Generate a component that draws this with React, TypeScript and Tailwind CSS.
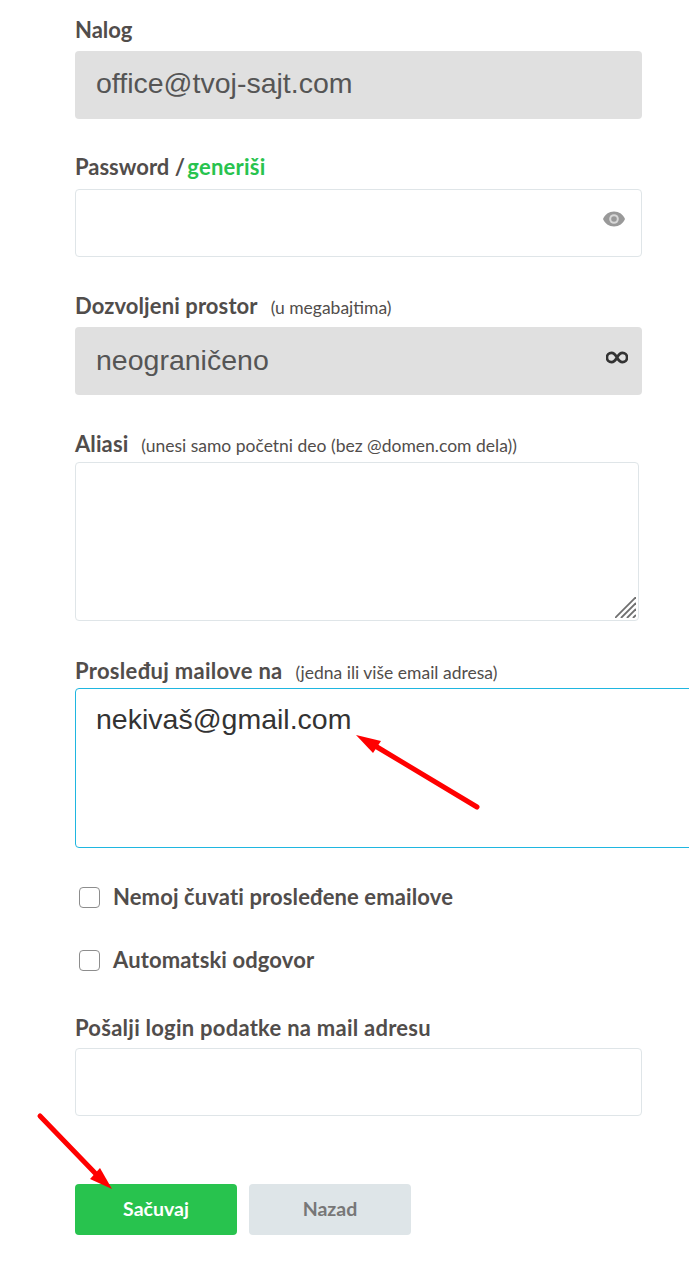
import type { ReactNode } from "react";

function FieldLabel({ children, className = "" }: { children: ReactNode; className?: string }) {
  return <label className={`block text-[22px] font-bold leading-[26px] text-[#514d4b] ${className}`}>{children}</label>;
}

function Hint({ children }: { children: ReactNode }) {
  return <span className="ml-[13px] text-[17.5px] font-normal leading-none tracking-normal text-[#514d4b]">{children}</span>;
}

const boxClass =
  "block h-[68px] w-[567px] rounded-[4px] px-[21px] font-['Liberation_Sans',Arial,sans-serif] text-[28.5px] outline-none";

function CheckRow({ label, gap, className = "" }: { label: string; gap: string; className?: string }) {
  return (
    <div className={`flex items-center pl-1 ${className}`}>
      <span className={`h-[21px] w-[21px] rounded-[4px] border border-[#8d8d8d] bg-white ${gap}`} />
      <span className="text-[22px] font-bold leading-[26px] tracking-[0.12px] text-[#514d4b]">{label}</span>
    </div>
  );
}

function ResizeGrip() {
  return (
    <svg className="absolute right-[3px] bottom-[3px]" width="21" height="21" viewBox="0 0 21 21" stroke="#6f6f6f" strokeWidth="1.8" strokeLinecap="round" fill="none">
      <path d="M0.500 20.500 L20.500 0.500" />
      <path d="M6.500 20.500 L20.500 6.500" />
      <path d="M12.500 20.500 L20.500 12.500" />
      <path d="M18.500 20.500 L20.500 18.500" />
    </svg>
  );
}

function Arrow({ className, x1, y1, x2, y2, head }: { className: string; x1: number; y1: number; x2: number; y2: number; head: string }) {
  return (
    <svg className={`absolute ${className}`} width="130" height="120" viewBox="0 0 130 120" fill="none">
      <line x1={x1} y1={y1} x2={x2} y2={y2} stroke="#ff0000" strokeWidth="5" strokeLinecap="round" />
      <polygon points={head} fill="#ff0000" />
    </svg>
  );
}

export default function App() {
  return (
    <div className="relative h-[1284px] w-[689px] overflow-hidden bg-white pl-[75px] pt-[17px] font-['Lato','Noto_Sans',sans-serif]">
      <FieldLabel>Nalog</FieldLabel>
      <input readOnly value="office@tvoj-sajt.com" className={`${boxClass} mt-[8px] bg-[#e0e0e0] pb-[3px] text-[#555]`} />

      <FieldLabel className="mt-[35px]">
        Password / <span className="-ml-[3px] tracking-[0.25px] text-[#28c34e]">generiši</span>
      </FieldLabel>
      <div className="relative mt-[9px] w-[567px]">
        <input type="text" className={`${boxClass} border border-[#dfe5e8] bg-white`} />
        <svg className="absolute right-[16px] top-[18px]" width="24" height="24" viewBox="0 0 24 24" fill="#999">
          <path d="M12 4.500C7 4.500 2.730 7.610 1 12c1.730 4.390 6 7.500 11 7.500s9.270-3.110 11-7.500c-1.730-4.390-6-7.500-11-7.500z" />
          <circle cx="12" cy="12" r="4.800" fill="#d8d8d8" />
          <circle cx="12" cy="12" r="2.800" fill="#999" />
        </svg>
      </div>

      <FieldLabel className="mt-[36px] tracking-[0.1px]">
        Dozvoljeni prostor<Hint>(u megabajtima)</Hint>
      </FieldLabel>
      <div className="relative mt-[8px] w-[567px]">
        <input readOnly value="neograničeno" className={`${boxClass} bg-[#e0e0e0] pb-[2px] text-[#555]`} />
        <svg className="absolute right-[14px] top-[24px]" width="22" height="13" viewBox="0 0 24 14" fill="none" stroke="#333" strokeWidth="3">
          <path d="M12 7C10 3.500 8.500 2 6 2a5 5 0 0 0 0 10c2.500 0 4-1.500 6-5s3.500-5 6-5a5 5 0 0 1 0 10c-2.500 0-4-1.500-6-5z" />
        </svg>
      </div>

      <FieldLabel className="mt-[36px] tracking-[0.1px]">
        Aliasi<Hint>(unesi samo početni deo (bez @domen.com dela))</Hint>
      </FieldLabel>
      <div className="relative mt-[5px] h-[159px] w-[564px]">
        <textarea className="block h-full w-full resize-none rounded-[4px] border border-[#dfe5e8] bg-white outline-none" />
        <ResizeGrip />
      </div>

      <FieldLabel className="mt-[37px] tracking-[0.3px]">
        Prosleđuj mailove na<Hint>(jedna ili više email adresa)</Hint>
      </FieldLabel>
      <textarea
        readOnly
        value="nekivaš@gmail.com"
        className="mt-[4px] block h-[160px] w-[640px] resize-none rounded-[4px] border border-[#1fb6e0] bg-white pl-[20px] pr-[21px] pt-[15px] font-['Liberation_Sans',Arial,sans-serif] text-[28.5px] leading-[31px] text-[#333] outline-none"
      />

      <CheckRow label="Nemoj čuvati prosleđene emailove" gap="mr-[13px]" className="mt-[36px]" />
      <CheckRow label="Automatski odgovor" gap="mr-[13px]" className="mt-[37px]" />

      <FieldLabel className="mt-[42px] tracking-[0.25px]">Pošalji login podatke na mail adresu</FieldLabel>
      <input type="text" className={`${boxClass} mt-[7px] border border-[#dfe5e8] bg-white`} />

      <div className="mt-[68px] flex gap-[12px]">
        <button className="h-[51px] w-[162px] rounded-[4px] bg-[#28c34e] pb-[1px] text-[19.500px] font-bold text-white">Sačuvaj</button>
        <button className="h-[51px] w-[162px] rounded-[4px] bg-[#dee5e8] pb-[1px] text-[19.500px] font-bold text-[#777]">Nazad</button>
      </div>

      <Arrow className="left-[350px] top-[700px]" x1={127} y1={107} x2={27} y2={47} head="6,35 31,41 23,53" />
      <Arrow className="left-[20px] top-[1100px]" x1={20} y1={16} x2={75} y2={73} head="92,89 80,68 70,79" />
    </div>
  );
}
